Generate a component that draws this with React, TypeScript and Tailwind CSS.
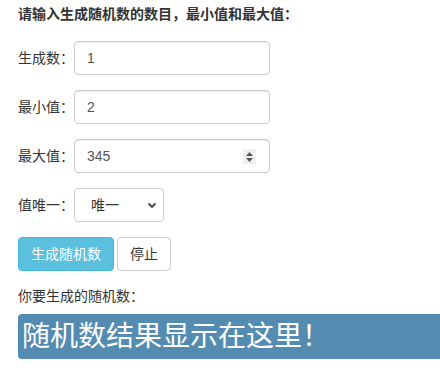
import React from "react";

const font = {
  fontFamily:
    '"Liberation Sans", Arial, "Noto Sans CJK SC", sans-serif',
};

const Row = ({
  label,
  children,
}: {
  label: string;
  children: React.ReactNode;
}) => (
  <div className="flex items-center h-[34px] mb-[15px]">
    <label className="w-[56px] text-[14px] leading-5 text-[#333]">{label}</label>
    {children}
  </div>
);

const TextBox = ({ value, spinner }: { value: string; spinner?: boolean }) => (
  <div className="relative w-[196px] h-[34px] border border-[#ccc] rounded-[4px] bg-white flex items-center px-3 text-[14px] text-[#555] shadow-[inset_0_1px_1px_rgba(0,0,0,0.075)]">
    {value}
    {spinner && (
      <div className="absolute right-[13px] top-[9px] w-[13px] h-[15px] bg-[#efefef] flex flex-col items-center justify-center gap-[2px]">
        <svg width="7" height="4" viewBox="0 0 7 4">
          <path d="M3.5 0L7 4H0z" fill="#555" />
        </svg>
        <svg width="7" height="4" viewBox="0 0 7 4">
          <path d="M0 0h7L3.5 4z" fill="#555" />
        </svg>
      </div>
    )}
  </div>
);

export default function App() {
  return (
    <div className="w-[440px] h-[386px] overflow-hidden bg-white pl-[18px]" style={font}>
      <h4 className="pt-[4px] text-[14px] leading-5 font-bold text-[#333] mb-[17px]">
        请输入生成随机数的数目，最小值和最大值：
      </h4>

      <Row label="生成数：">
        <TextBox value="1" />
      </Row>
      <Row label="最小值：">
        <TextBox value="2" />
      </Row>
      <Row label="最大值：">
        <TextBox value="345" spinner />
      </Row>
      <Row label="值唯一：">
        <div className="relative w-[90px] h-[34px] border border-[#ccc] rounded-[4px] bg-white flex items-center pl-[16px] text-[14px] text-[#333]">
          唯一
          <svg
            className="absolute right-[6px] top-[13px]"
            width="10"
            height="7"
            viewBox="0 0 10 7"
          >
            <path d="M1.5 1.5L5 5l3.5-3.5" stroke="#444" strokeWidth="1.8" fill="none" />
          </svg>
        </div>
      </Row>

      <div className="flex gap-[3px] mb-[15px]">
        <button className="w-[96px] h-[34px] rounded-[4px] bg-[#5bc0de] border border-[#46b8da] text-white text-[14px]">
          生成随机数
        </button>
        <button className="w-[54px] h-[34px] rounded-[4px] bg-white border border-[#ccc] text-[#333] text-[14px]">
          停止
        </button>
      </div>

      <p className="text-[14px] leading-5 text-[#333] mb-[8px]">你要生成的随机数：</p>

      <div className="h-[45px] bg-[#548bb0] rounded-l-[4px] flex items-center pl-[4px] text-white text-[28px] leading-none">
        随机数结果显示在这里！
      </div>
    </div>
  );
}
